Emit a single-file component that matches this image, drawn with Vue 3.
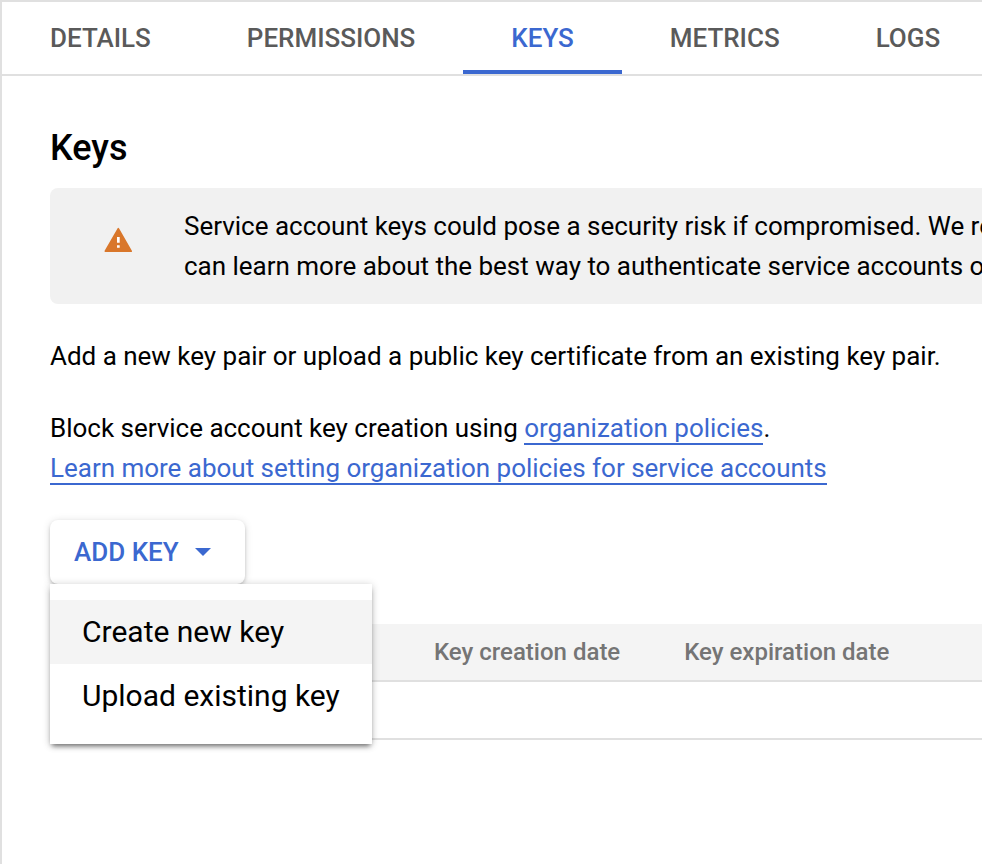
<template>
  <div class="panel">
    <nav class="tabs">
      <button
        v-for="tab in tabs"
        :key="tab"
        type="button"
        class="tab"
        :class="{ 'is-active': tab === activeTab }"
        @click="activeTab = tab"
      >
        {{ tab }}
      </button>
    </nav>

    <main class="content">
      <h1 class="title">Keys</h1>

      <div class="banner">
        <svg class="banner__icon" viewBox="0 0 28 26" aria-hidden="true">
          <path
            d="M14.3 1.7 27.2 24.2H1.3Z"
            fill="#d9772b"
            stroke="#d9772b"
            stroke-width="1.6"
            stroke-linejoin="round"
          />
          <path d="M13 10h2.7v5.8H13zM13 18.2h2.7v2.6H13z" fill="#fff" />
        </svg>
        <p class="banner__text">
          Service account keys could pose a security risk if compromised. We re<br />
          can learn more about the best way to authenticate service accounts o
        </p>
      </div>

      <p class="text">Add a new key pair or upload a public key certificate from an existing key pair.</p>

      <p class="text">
        Block service account key creation using <a class="link" href="#">organization policies</a>.<br />
        <a class="link" href="#">Learn more about setting organization policies for service accounts</a>
      </p>

      <div class="dropdown">
        <button type="button" class="add-key" @click="menuOpen = !menuOpen">
          <span>ADD KEY</span>
          <svg class="caret" viewBox="0 0 16 8" aria-hidden="true">
            <path d="M0 0h16L8 8z" fill="currentColor" />
          </svg>
        </button>
        <ul v-if="menuOpen" class="menu">
          <li
            v-for="(item, index) in menuItems"
            :key="item"
            class="menu__item"
            :class="{ 'is-focused': index === 0 }"
          >
            {{ item }}
          </li>
        </ul>
      </div>

      <div class="table">
        <div class="table__head">
          <span class="table__cell">Key creation date</span>
          <span class="table__cell">Key expiration date</span>
        </div>
        <div class="table__row"></div>
      </div>
    </main>
  </div>
</template>

<script setup>
import { ref } from 'vue';

const tabs = ['DETAILS', 'PERMISSIONS', 'KEYS', 'METRICS', 'LOGS'];
const activeTab = ref('KEYS');

const menuItems = ['Create new key', 'Upload existing key'];
const menuOpen = ref(true);
</script>

<style>
body {
  margin: 0;
  background: #fff;
}
</style>

<style scoped>
.panel {
  box-sizing: border-box;
  height: 864px;
  overflow: hidden;
  border-top: 2px solid #e0e0e0;
  border-left: 2px solid #e0e0e0;
  background: #fff;
  color: #000;
  font-family: Roboto, sans-serif;
  font-size: 26px;
  line-height: 40px;
}

button {
  border: 0;
  background: none;
  font: inherit;
  cursor: pointer;
}

.tabs {
  display: flex;
  height: 72px;
  border-bottom: 2px solid #e0e0e0;
}

.tab {
  flex: none;
  box-sizing: border-box;
  padding: 4px 48px 0;
  border-bottom: 4px solid transparent;
  color: #5a5a5a;
  font-weight: 500;
  letter-spacing: -0.018px;
  white-space: nowrap;
}

.tab.is-active {
  border-bottom-color: #3b68d0;
  color: #3b68d0;
}

.content {
  padding: 48px 0 0 48px;
}

.title {
  margin: 0 0 16px;
  font-size: 36px;
  font-weight: 500;
  line-height: 48px;
}

.banner {
  display: flex;
  align-items: flex-start;
  padding: 18px 0;
  border-radius: 8px 0 0 8px;
  background: #f1f1f1;
}

.banner__icon {
  flex: none;
  width: 28px;
  height: 26px;
  margin: 21px 52px 0 54px;
}

.banner__text {
  margin: 0;
  white-space: nowrap;
  letter-spacing: -0.012px;
}

.text {
  margin: 32px 0 0;
  letter-spacing: -0.015px;
  white-space: nowrap;
}

.link {
  border-bottom: 2px solid #3b68d0;
  color: #3b68d0;
  text-decoration: none;
}

.dropdown {
  position: relative;
  width: max-content;
  margin-top: 32px;
}

.add-key {
  display: flex;
  align-items: center;
  gap: 16px;
  width: 195px;
  height: 64px;
  padding: 0 24px;
  border-radius: 8px;
  background: #fff;
  box-shadow: 0 2px 4px -1px rgba(0, 0, 0, 0.28), 0 1px 8px rgba(0, 0, 0, 0.12);
  color: #3b68d0;
  font-weight: 500;
  white-space: nowrap;
}

.caret {
  width: 16px;
  height: 8px;
}

.menu {
  position: absolute;
  top: 64px;
  left: 0;
  z-index: 1;
  width: 322px;
  margin: 0;
  padding: 16px 0;
  box-sizing: border-box;
  background: #fff;
  box-shadow: 0 4px 5px -2px rgba(0, 0, 0, 0.5), 0 1px 8px rgba(0, 0, 0, 0.2);
  list-style: none;
}

.menu__item {
  padding-left: 32px;
  font-size: 30px;
  line-height: 64px;
  white-space: nowrap;
}

.menu__item.is-focused {
  background: #f4f4f4;
}

.table {
  margin-top: 40px;
}

.table__head {
  display: flex;
  gap: 64px;
  padding-left: 384px;
  border-bottom: 2px solid #e0e0e0;
  background: #f4f4f4;
  color: #757575;
  font-size: 24px;
  font-weight: 500;
  line-height: 56px;
}

.table__cell {
  flex: none;
  white-space: nowrap;
}

.table__row {
  height: 56px;
  border-bottom: 2px solid #e0e0e0;
}
</style>
